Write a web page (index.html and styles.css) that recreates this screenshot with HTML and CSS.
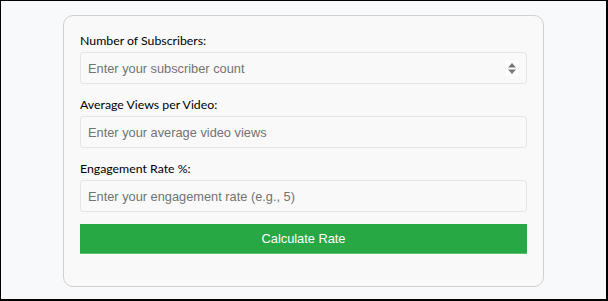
FILE: index.html
```html
<!DOCTYPE html>
<html lang="en">
<head>
<meta charset="utf-8">
<title>Rate Calculator</title>
<link rel="stylesheet" href="styles.css">
</head>
<body>
<div class="page">
  <div class="card">
    <div class="group">
      <label class="label" for="subs">Number of Subscribers:</label>
      <div class="field-wrap">
        <input class="field" id="subs" type="number" placeholder="Enter your subscriber count">
        <span class="spin" aria-hidden="true">
          <svg width="10" height="13" viewBox="0 0 10 13"><path d="M5 1 L9 5.5 H1 Z" fill="#777"/><path d="M1 7.5 H9 L5 12 Z" fill="#777"/></svg>
        </span>
      </div>
    </div>
    <div class="group">
      <label class="label" for="views">Average Views per Video:</label>
      <input class="field" id="views" type="text" placeholder="Enter your average video views">
    </div>
    <div class="group">
      <label class="label" for="eng">Engagement Rate %:</label>
      <input class="field" id="eng" type="text" placeholder="Enter your engagement rate (e.g., 5)">
    </div>
    <button class="btn" type="button">Calculate Rate</button>
    <div class="result"></div>
  </div>
</div>
</body>
</html>
```
FILE: styles.css
```css
* { box-sizing: border-box; }
html, body { margin: 0; padding: 0; }
body {
  height: 301px;
  background: #f8f9fb;
  border-style: solid;
  border-color: #000;
  border-width: 1px 2px 2px 1px;
  overflow: hidden;
}
.page {
  padding-top: 14px;
}
.card {
  width: 481px;
  margin: 0 auto;
  background: #f9f9f9;
  border: 1px solid #d0d0d0;
  border-radius: 10px;
  padding: 16px;
}
.group {
  margin-bottom: 12px;
}
.label {
  display: block;
  height: 20px;
  font-family: Lato, sans-serif;
  font-size: 12.3px;
  line-height: 18px;
  color: #000;
}
.field-wrap {
  position: relative;
}
.field {
  display: block;
  width: 100%;
  height: 32px;
  margin: 0;
  padding: 0 7px;
  background: #f9f9f9;
  border: 1px solid #e2e6ea;
  border-radius: 3px;
  font-family: "Liberation Sans", Arial, sans-serif;
  font-size: 12.8px;
  color: #333;
  outline: none;
  -moz-appearance: textfield;
}
.field::-webkit-inner-spin-button,
.field::-webkit-outer-spin-button {
  -webkit-appearance: none;
  margin: 0;
}
.field::placeholder { color: #737373; }
.spin {
  position: absolute;
  right: 9px;
  top: 8px;
  width: 12px;
  height: 16px;
  background: #fff;
  display: flex;
  align-items: center;
  justify-content: center;
}
.btn {
  display: block;
  width: 100%;
  height: 30px;
  margin: 0;
  padding: 0;
  background: #28a745;
  border: 0;
  border-bottom: 1px solid #5cc16f;
  color: #fff;
  font-family: "Liberation Sans", Arial, sans-serif;
  font-size: 12.8px;
}
.result { height: 16px; }
```
